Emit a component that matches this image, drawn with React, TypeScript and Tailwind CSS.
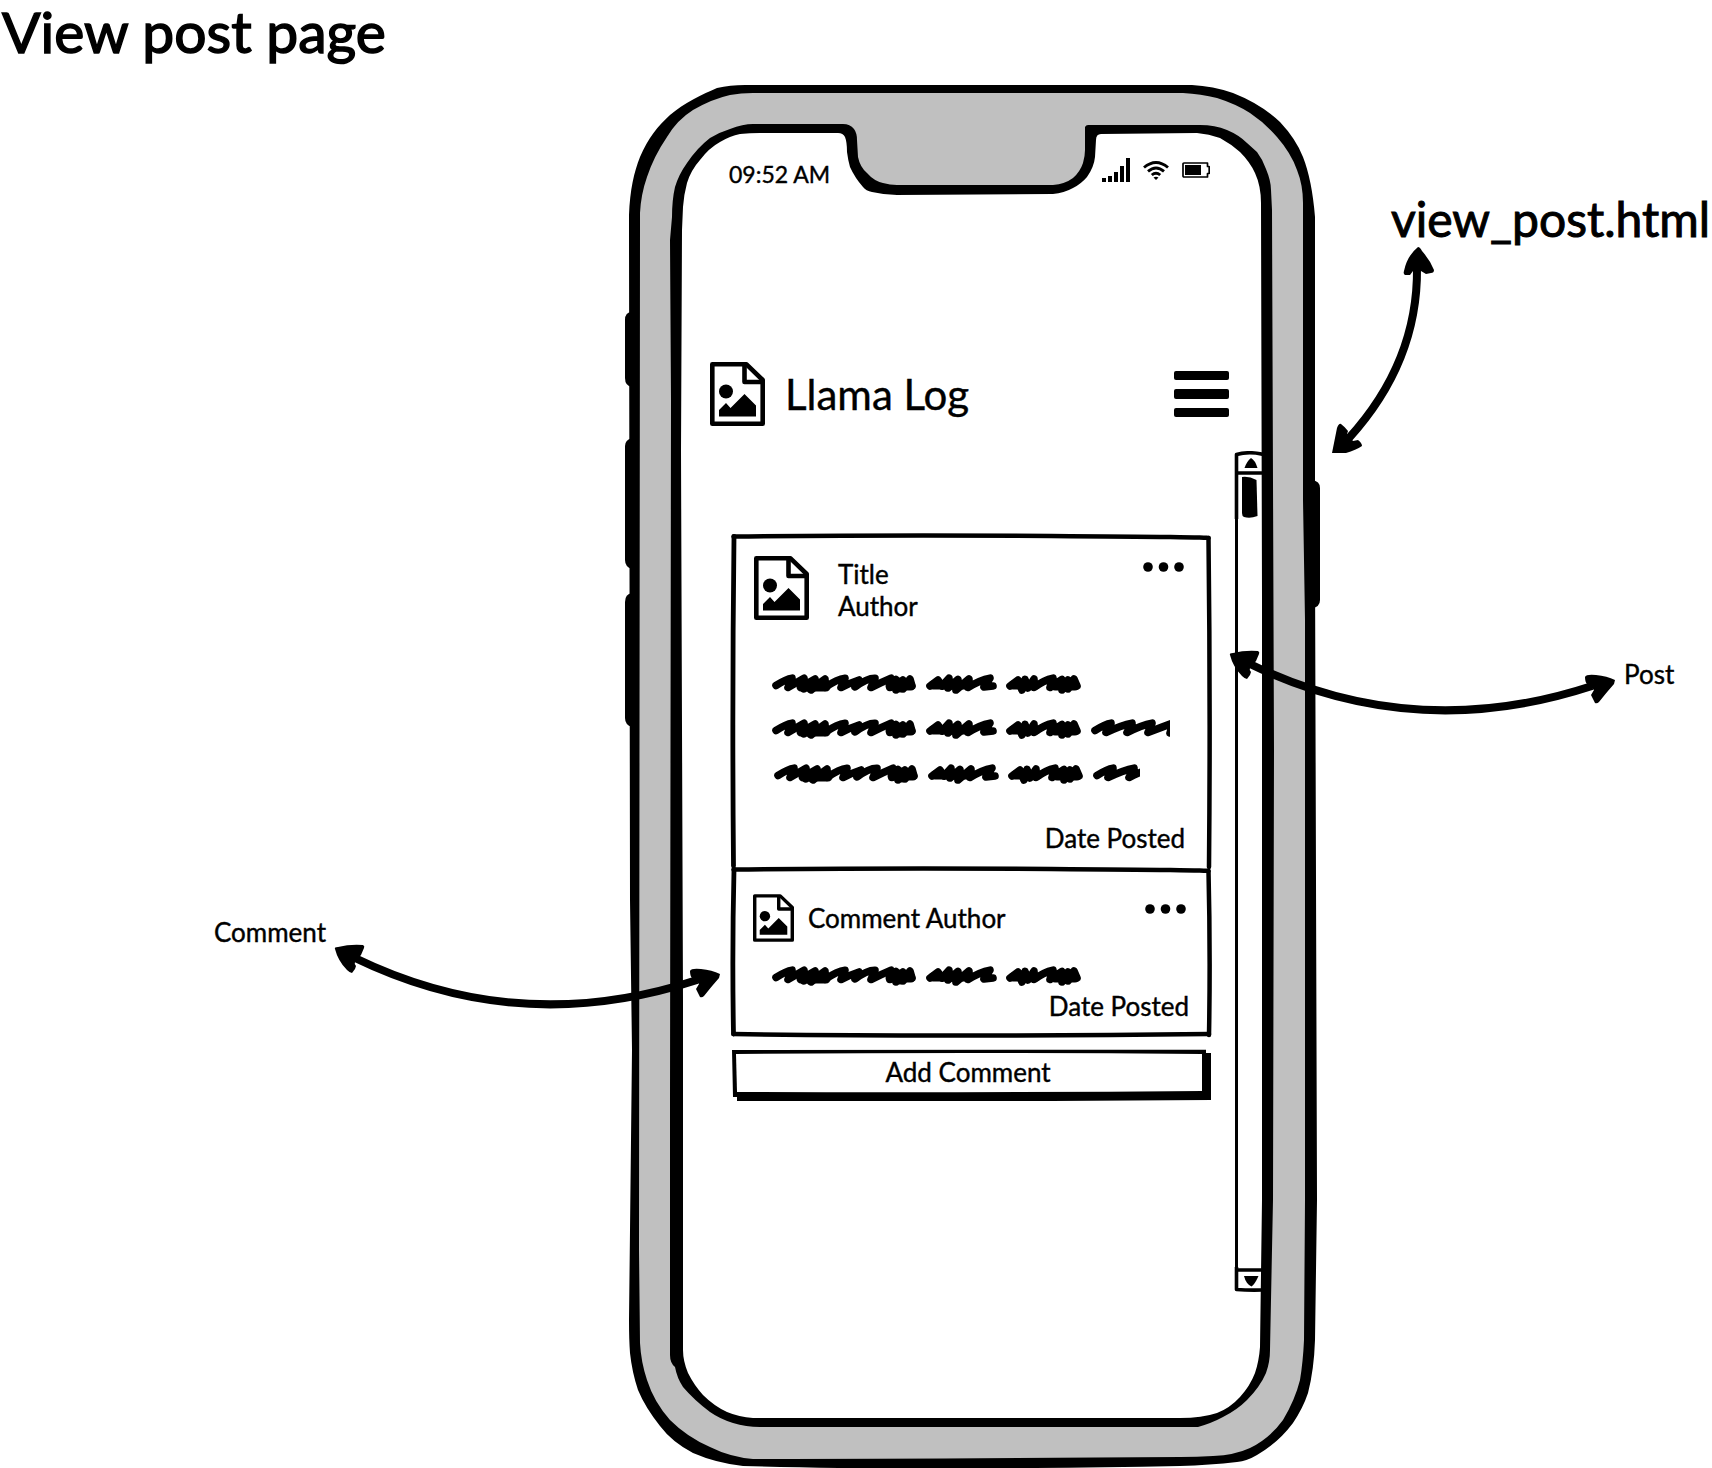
import React from "react";

type ArrowProps = { className: string };

/* Picture placeholder: a sheet with a folded corner, a sun and a hill. */
function ImageIcon({ className }: { className: string }) {
  return (
    <svg viewBox="0 0 55 64" className={className} fill="none" stroke="black" strokeWidth="4.600" strokeLinejoin="round" aria-hidden="true">
      <path d="M2.300 2.300H36.500L52.700 18V61.700H2.300Z" />
      <path d="M34.500 2V20H53" />
      <circle cx="16" cy="29.500" r="7" fill="black" stroke="none" />
      <path d="M9 48L16 41L20.500 46L34.500 32L46 43.500V54.500H9Z" fill="black" stroke="none" />
    </svg>
  );
}

function Dots({ label }: { label: string }) {
  return (
    <button type="button" aria-label={label} className="shrink-0">
      <svg viewBox="0 0 42 10" className="h-[10px] w-[42px]" aria-hidden="true">
        <circle cx="5" cy="5" r="4.800" />
        <circle cx="20.500" cy="5" r="4.800" />
        <circle cx="36" cy="5" r="4.800" />
      </svg>
    </button>
  );
}

/* A line of scribbled body text; the view box width decides where it is cut. */
function Scribble({ width, className }: { width: number; className: string }) {
  return (
    <svg viewBox={`0 0 ${width} 20`} className={className} fill="none" stroke="black" strokeWidth="7.600" strokeLinecap="round" strokeLinejoin="round" aria-hidden="true">
      <path d="M4 11.500Q14 5 20 4.200L16 13.500L32 4.200L32 15L36 9L43 5L39 16L46 10L53 5L53 13.500Q65 5 73 4.200L69 13.500Q78 9 87 6L83 13Q95 4 103 4.200L99 13.500Q110 8 119 4.200L118 13.500L124 5.500L124 16L131 6L131 15L138 5L140 12" />
      <path d="M29 13H54M38 10V14M118 12H139M128 8V14" strokeWidth="9" />
      <path d="M158 12L166 6L170 12L177 4.200L176 14L186 5.500L184 16L197 5L196 13.500Q208 6 218 4.200L212 13L221 12" />
      <path d="M161 11H196" strokeWidth="9" />
      <path d="M238 12L246 6L250 16L253 5.500L256 14L262 5L262 13.500Q272 6 281 4.200L278 13.500L290 5.500L290 16L296 6L296 15L302 5L305 12" />
      <path d="M241 11H264M283 12H303" strokeWidth="9" />
      {width > 320 && (
        <path d="M323 11.500Q333 5 339 4.200L334 13.500Q350 6 360 4.200L355 13.500Q370 6 380 4.200L376 13.500Q390 8 401 4L398 14" />
      )}
    </svg>
  );
}

/* Hand-drawn rectangle; the bottom edge is left out where another box follows. */
function Frame({ height, open = false }: { height: number; open?: boolean }) {
  return (
    <svg viewBox={`0 0 480 ${height}`} preserveAspectRatio="none" className="absolute inset-0 h-full w-full overflow-visible" fill="none" stroke="black" strokeLinecap="round" aria-hidden="true">
      <path d={`M3 2.500Q1 ${height / 2} 2.500 ${height - 3}`} strokeWidth="4.800" />
      <path d="M2.500 2.500Q160 1 320 2T477.500 4" strokeWidth="4.500" />
      <path d={`M477.500 4Q479.500 ${height / 2} 478 ${height - 2}`} strokeWidth="4.500" />
      {!open && <path d={`M2.500 ${height - 3}Q200 ${height} 478 ${height - 3}`} strokeWidth="4.500" />}
    </svg>
  );
}

function SideArrow({ className }: ArrowProps) {
  return (
    <svg viewBox="1228 644 390 74" className={className} aria-hidden="true">
      <path d="M1250 664Q1415 744 1592 686" fill="none" stroke="black" strokeWidth="8" />
      <path d="M1230 655Q1229 653 1233 653Q1245 650 1258 651Q1260 652 1259 654L1256 661L1250 668Q1249 670 1251 672L1250 675L1247 679Q1245 679 1242 676Q1233 667 1230 655Z" />
      <path d="M1615 680Q1607 676 1596 675Q1586 674 1585 677Q1585 682 1587 684L1594 690L1591 695L1595 703Q1597 704 1599 702Q1606 693 1614 684Z" />
    </svg>
  );
}

function FileArrow({ className }: ArrowProps) {
  return (
    <svg viewBox="1330 246 106 210" className={className} aria-hidden="true">
      <path d="M1417 268Q1418 362 1349 438" fill="none" stroke="black" strokeWidth="8" />
      <path d="M1418 247Q1420 247 1422 251Q1430 260 1434 270Q1434 273 1431 273L1426 274L1421 271L1413 271L1410 275H1405Q1403 274 1404 271Q1407 256 1418 247Z" />
      <path d="M1332 453L1337 428Q1339 423 1341 424Q1345 427 1348 431L1347 434L1353 441L1358 440Q1362 443 1362 446Q1356 450 1346 453Z" />
    </svg>
  );
}

function PhoneBody() {
  return (
    <svg viewBox="625 85 695 1383" preserveAspectRatio="none" className="absolute inset-0 h-full w-full overflow-hidden" aria-hidden="true">
      <path d="M632 312Q625 312 625 320V378Q625 386 632 387ZM632 438Q625 440 625 446V560Q625 567 632 569ZM632 593Q625 594 625 602V718Q625 725 632 727ZM1312 480Q1320 481 1320 488V600Q1320 607 1312 608Z" />
      <path d="M629 230V215C630 190 634 172 640 157C648 138 658 126 670 115C684 103 703 94 717 88Q730 85 745 85H1192Q1213 86 1233 93Q1261 104 1280 122Q1296 139 1303 157Q1312 180 1315 217V560L1317 1200L1315 1340Q1314 1370 1308 1393Q1303 1408 1293 1423Q1278 1443 1257 1455Q1247 1461 1237 1462Q1210 1465 1180 1466Q900 1471 743 1466Q716 1463 693 1453Q672 1442 660 1426Q645 1407 638 1390Q632 1372 630 1353Q629 1340 629 1320L632 1050L630 900Z" />
      <path fill="#c0c0c0" d="M640 230V213Q641 194 647 177Q654 156 667 137Q677 120 693 110Q712 99 730 95Q741 93 753 93H1183Q1201 94 1217 98Q1236 104 1250 113Q1265 123 1277 137Q1291 153 1297 170Q1303 185 1303 203V500L1305 620V1200L1304 1340Q1303 1362 1300 1380Q1295 1400 1283 1420Q1270 1438 1250 1448Q1235 1455 1213 1456Q1197 1457 1180 1457Q900 1459 753 1459Q730 1457 710 1447Q687 1437 670 1420Q654 1402 647 1380Q641 1362 640 1343L639 1250Z" />
      <path d="M671 400L670 240L672 217Q672 200 675 187Q679 174 687 163Q697 148 710 138Q720 132 730 129Q743 124 753 124H843Q850 124 854 129Q857 133 857 140L858 157Q860 167 867 173Q874 181 883 183Q890 185 897 185H1053Q1065 184 1073 178Q1080 172 1083 163Q1085 156 1085 150V127Q1086 125 1088 125H1200Q1215 125 1227 130Q1239 135 1247 143L1257 152Q1263 160 1266 169Q1271 181 1271 190L1272 210L1274 750L1273 1200L1270 1350Q1270 1362 1266 1373Q1260 1387 1247 1400Q1237 1410 1223 1417Q1212 1423 1198 1427H760Q746 1427 733 1423Q720 1419 710 1412Q694 1400 683 1387Q677 1378 675 1367Q670 1363 670 1355V1100Z" />
      <path fill="white" d="M681 450L682 230L683 207Q684 194 687 183Q691 170 700 160Q709 148 720 142Q730 136 740 134Q750 133 760 133H838Q843 133 845 137Q847 142 847 152Q848 160 850 167Q855 178 863 187Q866 191 872 192Q885 195 897 195L1053 194Q1064 193 1073 188Q1081 184 1087 177Q1094 167 1095 157L1096 140Q1096 134 1101 134L1197 133Q1209 134 1220 138Q1231 144 1240 152Q1250 162 1255 173Q1261 186 1261 203L1262 600V1200L1260 1347Q1259 1361 1255 1373Q1250 1386 1240 1397Q1230 1408 1217 1413Q1202 1418 1180 1418H753Q739 1417 727 1412Q714 1406 703 1395Q694 1385 688 1373Q683 1361 683 1350V1000Z" />
    </svg>
  );
}

function StatusBar() {
  return (
    <div className="flex items-start justify-between pt-[25px] pr-[52px] pl-[46px]">
      <span className="text-[23px] leading-[32px]">09:52 AM</span>
      <div className="flex items-center gap-[13px]">
        <svg viewBox="0 0 28 24" className="h-[24px] w-[28px]" aria-hidden="true">
          <path d="M0 20h4v4H0zM6 18h4v6H6zM12 14h4v10h-4zM18 8h4v16h-4zM24 0h4v24h-4z" />
        </svg>
        <svg viewBox="0 0 26 19" className="h-[19px] w-[26px]" fill="none" stroke="black" strokeWidth="2.900" aria-hidden="true">
          <path d="M1 6.500Q13 -3.500 25 6.500" />
          <path d="M5 10.300Q13 3.500 21 10.300" />
          <path d="M8.800 14Q13 10.300 17.200 14" />
          <path d="M10.500 16.500Q13 14.800 15.500 16.500L13 19Z" fill="black" stroke="none" />
        </svg>
        <svg viewBox="0 0 28 16" className="h-[16px] w-[28px]" fill="none" stroke="black" strokeWidth="1.700" aria-hidden="true">
          <path d="M2 1H25.500V4.500H27.200V11.500H25.500V15H2Q1 15 1 14V2Q1 1 2 1Z" strokeLinejoin="round" />
          <path d="M3 3H19V13H3Z" fill="black" stroke="none" />
        </svg>
      </div>
    </div>
  );
}

function ScrollTrack() {
  return (
    <div className="flex h-[841px] w-[28px] shrink-0 flex-col justify-between" aria-hidden="true">
      <svg viewBox="0 0 28 68" className="h-[68px] w-full" fill="none" stroke="black" strokeWidth="3.600" strokeLinejoin="round">
        <path d="M2.500 68V3.500Q15 0 30 3.500M2 22H30" />
        <path d="M10.500 17Q13 10 17 7Q21 9 23.500 17Z" fill="black" stroke="none" />
        <path d="M8 26Q15 25 22.500 29L23.500 65Q16 68 10 66Q8 65 8 62Z" fill="black" stroke="none" />
      </svg>
      <div className="ml-px w-[3px] grow bg-black" />
      <svg viewBox="0 0 28 25" className="h-[25px] w-full" fill="none" stroke="black" strokeWidth="3.600" strokeLinejoin="round">
        <path d="M2.500 0V22.500Q15 23.500 30 23M2 3H30" />
        <path d="M10 9H24.500Q21 17 17.500 19.500Q12 17 10 9Z" fill="black" stroke="none" />
      </svg>
    </div>
  );
}

function Post() {
  return (
    <article className="relative pt-[22px] pr-[26px] pb-[15px] pl-[23px]">
      <Frame height={335} open />
      <div className="relative">
        <div className="flex items-start">
          <ImageIcon className="h-[64px] w-[55px]" />
          <div className="grow pt-[2px] pl-[29px] leading-[32px]">
            <h2>Title</h2>
            <p>Author</p>
          </div>
          <div className="flex pt-[6px]">
            <Dots label="Post options" />
          </div>
        </div>
        <div className="mt-[52px] flex flex-col gap-[25px] pl-[18px]">
          <Scribble width={312} className="h-[20px] w-[312px]" />
          <Scribble width={398} className="h-[20px] w-[398px]" />
          <Scribble width={366} className="ml-[2px] h-[20px] w-[366px]" />
        </div>
        <p className="mt-[38px] text-right leading-[32px]">Date Posted</p>
      </div>
    </article>
  );
}

function Comment() {
  return (
    <article className="relative -mt-[2px] pt-[27px] pr-[22px] pb-[15px] pl-[22px]">
      <Frame height={170} />
      <div className="relative">
        <div className="flex items-start">
          <ImageIcon className="h-[48px] w-[41px]" />
          <h3 className="grow pt-[8px] pl-[14px] leading-[32px]">Comment Author</h3>
          <div className="flex pt-[10px] pr-[2px]">
            <Dots label="Comment options" />
          </div>
        </div>
        <div className="mt-[24px] pl-[19px]">
          <Scribble width={312} className="h-[20px] w-[312px]" />
        </div>
        <p className="mt-[4px] text-right leading-[32px]">Date Posted</p>
      </div>
    </article>
  );
}

function Phone() {
  return (
    <section className="relative px-[58px] pt-[48px] pb-[176px]">
      <PhoneBody />
      <div className="relative">
        <StatusBar />
        <header className="mt-[172px] flex items-center pr-[33px] pl-[27px]">
          <ImageIcon className="h-[64px] w-[55px]" />
          <h1 className="grow pl-[20px] text-[42px] leading-[50px]">Llama Log</h1>
          <button type="button" aria-label="Menu" className="flex flex-col gap-[9px]">
            <span className="h-[9px] w-[55px] rounded-[2px] bg-black" />
            <span className="h-[10px] w-[55px] rounded-[2px] bg-black" />
            <span className="h-[9px] w-[55px] rounded-[2px] bg-black" />
          </button>
        </header>
        <div className="mt-[25px] flex justify-between pl-[48px]">
          <div className="w-[480px] pt-[83px]">
            <Post />
            <Comment />
            <button type="button" className="relative mt-[12px] flex h-[52px] w-full items-center justify-center pr-[6px] pb-[6px]">
              <svg viewBox="0 0 480 52" preserveAspectRatio="none" className="absolute inset-0 h-full w-full" aria-hidden="true">
                <path d="M1 1L479 0.500H475V4H480V51Q240 53 6 52V48H2Z" />
                <path d="M5 5Q240 3 471 5V42Q240 44 6 43Z" fill="white" />
                <path d="M475 0H480V4H475Z" fill="white" />
              </svg>
              <span className="relative leading-[32px]">Add Comment</span>
            </button>
          </div>
          <ScrollTrack />
        </div>
      </div>
    </section>
  );
}

export default function App() {
  return (
    <main className="bg-white font-['Lato',sans-serif] text-[26px] text-black [-webkit-text-stroke:0.4px_black]">
      <h1 className="h-[85px] pl-[2px] text-[57px] leading-[62px] [-webkit-text-stroke:1.5px_black]">View post page</h1>
      <div className="grid grid-cols-[minmax(0,1fr)_695px_392px]">
        <aside className="relative z-10">
          <p className="pt-[831px] pr-[299px] text-right leading-[32px]">Comment</p>
          <SideArrow className="absolute top-[853px] right-[-98px] h-[74px] w-[390px]" />
        </aside>
        <Phone />
        <aside className="relative">
          <p className="pt-[106px] pr-[2px] text-right text-[48px] leading-[56px] [-webkit-text-stroke:1px_black]">view_post.html</p>
          <FileArrow className="absolute top-[161px] left-[10px] h-[210px] w-[106px]" />
          <SideArrow className="absolute top-[559px] left-[-92px] h-[74px] w-[390px]" />
          <p className="pt-[411px] pl-[304px] leading-[32px]">Post</p>
        </aside>
      </div>
    </main>
  );
}
